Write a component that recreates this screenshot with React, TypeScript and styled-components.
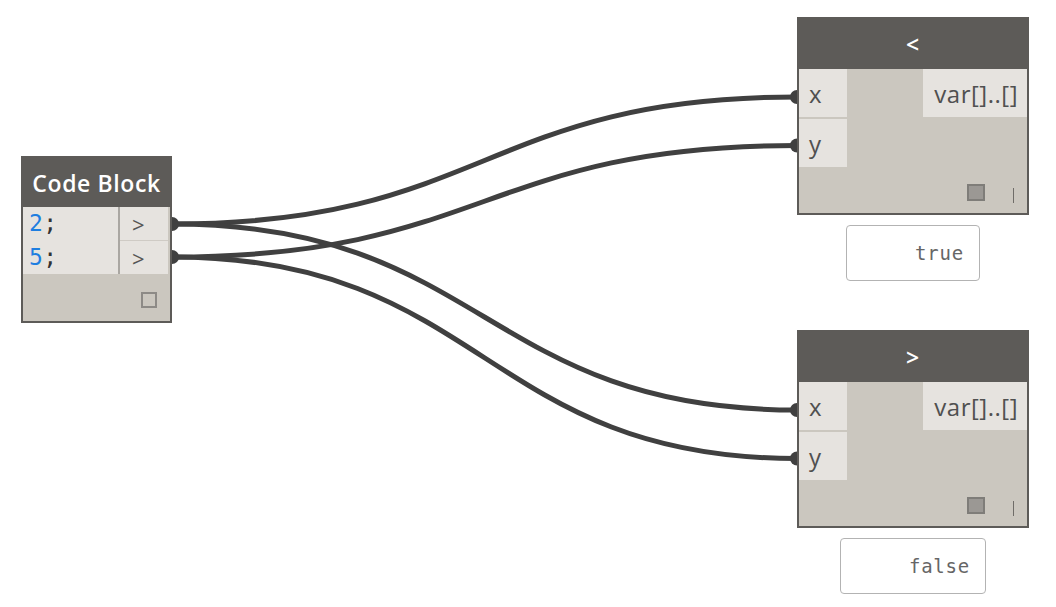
import React from 'react';
import styled, { createGlobalStyle } from 'styled-components';

const GlobalStyle = createGlobalStyle`
  html, body {
    margin: 0;
    padding: 0;
    background: #ffffff;
  }
  body {
    font-family: "Open Sans", "Noto Sans", sans-serif;
  }
`;

type Pt = { x: number; y: number };

// port centres on the canvas
const OUT_A: Pt = { x: 172, y: 224 };
const OUT_B: Pt = { x: 172, y: 257 };
const LT_X: Pt = { x: 797, y: 97 };
const LT_Y: Pt = { x: 797, y: 145.5 };
const GT_X: Pt = { x: 797, y: 410 };
const GT_Y: Pt = { x: 797, y: 458.5 };

const links: [Pt, Pt][] = [
  [OUT_A, LT_X],
  [OUT_B, LT_Y],
  [OUT_A, GT_X],
  [OUT_B, GT_Y],
];

const wirePath = (a: Pt, b: Pt) => {
  const d = (b.x - a.x) / 2;
  return `M${a.x} ${a.y} C${a.x + d} ${a.y} ${b.x - d} ${b.y} ${b.x} ${b.y}`;
};

const App: React.FC = () => {
  return (
    <Canvas>
      <GlobalStyle />
      <Wires width={1056} height={607} viewBox="0 0 1056 607">
        {links.map(([a, b], i) => (
          <path key={i} d={wirePath(a, b)} fill="none" stroke="#404040" strokeWidth={5} />
        ))}
        {[OUT_A, OUT_B, LT_X, LT_Y, GT_X, GT_Y].map((p, i) => (
          <circle key={i} cx={p.x} cy={p.y} r={7} fill="#404040" />
        ))}
      </Wires>

      <NodeSlot $x={21} $y={156}>
        <CodeNode>
          <Header $h={49}>Code Block</Header>
          <CodeBody>
            <CodeText>
              <CodeLine><Num>2</Num>;</CodeLine>
              <CodeLine><Num>5</Num>;</CodeLine>
            </CodeText>
            <OutPorts>
              <OutPort>&gt;</OutPort>
              <OutPort>&gt;</OutPort>
            </OutPorts>
          </CodeBody>
          <Footer $h={47}>
            <Check $filled={false} />
          </Footer>
        </CodeNode>
      </NodeSlot>

      <CompareNode x={797} y={17} op="<" result="true" />
      <CompareNode x={797} y={330} op=">" result="false" />
    </Canvas>
  );
};

const CompareNode: React.FC<{ x: number; y: number; op: string; result: string }> = ({ x, y, op, result }) => (
  <NodeSlot $x={x} $y={y}>
    <OpNode>
      <Header $h={50}>{op}</Header>
      <OpBody>
        <InPorts>
          <InPort>x</InPort>
          <InPort>y</InPort>
        </InPorts>
        <OutBox>var[]..[]</OutBox>
      </OpBody>
      <Footer $h={46}>
        <Check $filled />
        <Lacing />
      </Footer>
    </OpNode>
    <Preview>{result}</Preview>
  </NodeSlot>
);

export default App;

const Canvas = styled.div`
  position: relative;
  width: 1056px;
  height: 607px;
  overflow: hidden;
  background: #ffffff;
`;

const Wires = styled.svg`
  position: absolute;
  left: 0;
  top: 0;
`;

const NodeSlot = styled.div<{ $x: number; $y: number }>`
  position: absolute;
  left: ${p => p.$x}px;
  top: ${p => p.$y}px;
  display: flex;
  flex-direction: column;
  align-items: center;
  gap: 10px;
`;

const NodeBase = styled.div`
  box-sizing: border-box;
  border: 2px solid #5d5b58;
  background: #cbc7bf;
  display: flex;
  flex-direction: column;
`;

const CodeNode = styled(NodeBase)`
  width: 151px;
`;

const OpNode = styled(NodeBase)`
  width: 232px;
`;

const Header = styled.div<{ $h: number }>`
  height: ${p => p.$h}px;
  background: #5d5b58;
  color: #ffffff;
  display: flex;
  align-items: center;
  justify-content: center;
  font-size: 23px;
  font-weight: 600;
  letter-spacing: 0.6px;
`;

const CodeBody = styled.div`
  display: flex;
  height: 67px;
`;

const CodeText = styled.div`
  width: 97px;
  background: #e6e3df;
  border-right: 2px solid #aaa7a2;
  display: flex;
  flex-direction: column;
  padding-left: 6px;
  box-sizing: border-box;
`;

const CodeLine = styled.div`
  height: 33.5px;
  line-height: 33.5px;
  font-family: "DejaVu Sans Mono", "Liberation Mono", monospace;
  font-size: 23px;
  color: #333;
  letter-spacing: 0.5px;
`;

const Num = styled.span`
  color: #1e7ee0;
`;

const OutPorts = styled.div`
  width: 48px;
  display: flex;
  flex-direction: column;
  gap: 1px;
  background: #cfcbc5;
`;

const OutPort = styled.div`
  flex: 1;
  background: #e6e3df;
  color: #555;
  font-size: 22px;
  padding-left: 12px;
  display: flex;
  align-items: center;
`;

const Footer = styled.div<{ $h: number }>`
  height: ${p => p.$h}px;
  display: flex;
  justify-content: flex-end;
  align-items: center;
  padding: 4px 13px 0 0;
  box-sizing: border-box;
`;

const Check = styled.div<{ $filled: boolean }>`
  box-sizing: border-box;
  width: ${p => (p.$filled ? 18 : 16)}px;
  height: ${p => (p.$filled ? 17 : 16)}px;
  border: 2px solid ${p => (p.$filled ? '#7f7d79' : '#8d8a86')};
  background: ${p => (p.$filled ? '#9b9894' : 'transparent')};
`;

const Lacing = styled.div`
  width: 1.5px;
  height: 15px;
  margin: 6px 0 0 28px;
  background: #6f6c68;
`;

const OpBody = styled.div`
  display: flex;
  justify-content: space-between;
  align-items: flex-start;
  height: 98px;
`;

const InPorts = styled.div`
  width: 48px;
  display: flex;
  flex-direction: column;
  gap: 1.5px;
`;

const InPort = styled.div`
  height: 48px;
  background: #e6e3df;
  color: #505050;
  font-size: 24px;
  line-height: 50px;
  padding-left: 10px;
`;

const OutBox = styled.div`
  width: 104px;
  height: 48px;
  background: #e6e3df;
  color: #505050;
  font-size: 24px;
  line-height: 50px;
  text-align: right;
  padding-right: 9px;
  box-sizing: border-box;
  white-space: nowrap;
  letter-spacing: 0.5px;
`;

const Preview = styled.div`
  box-sizing: border-box;
  height: 56px;
  display: flex;
  align-items: center;
  justify-content: flex-end;
  padding: 0 15px 0 68px;
  border: 1.5px solid #b3b3b3;
  border-radius: 4px;
  background: #ffffff;
  font-family: "DejaVu Sans Mono", "Liberation Mono", monospace;
  font-size: 19px;
  letter-spacing: 0.8px;
  color: #666;
`;
